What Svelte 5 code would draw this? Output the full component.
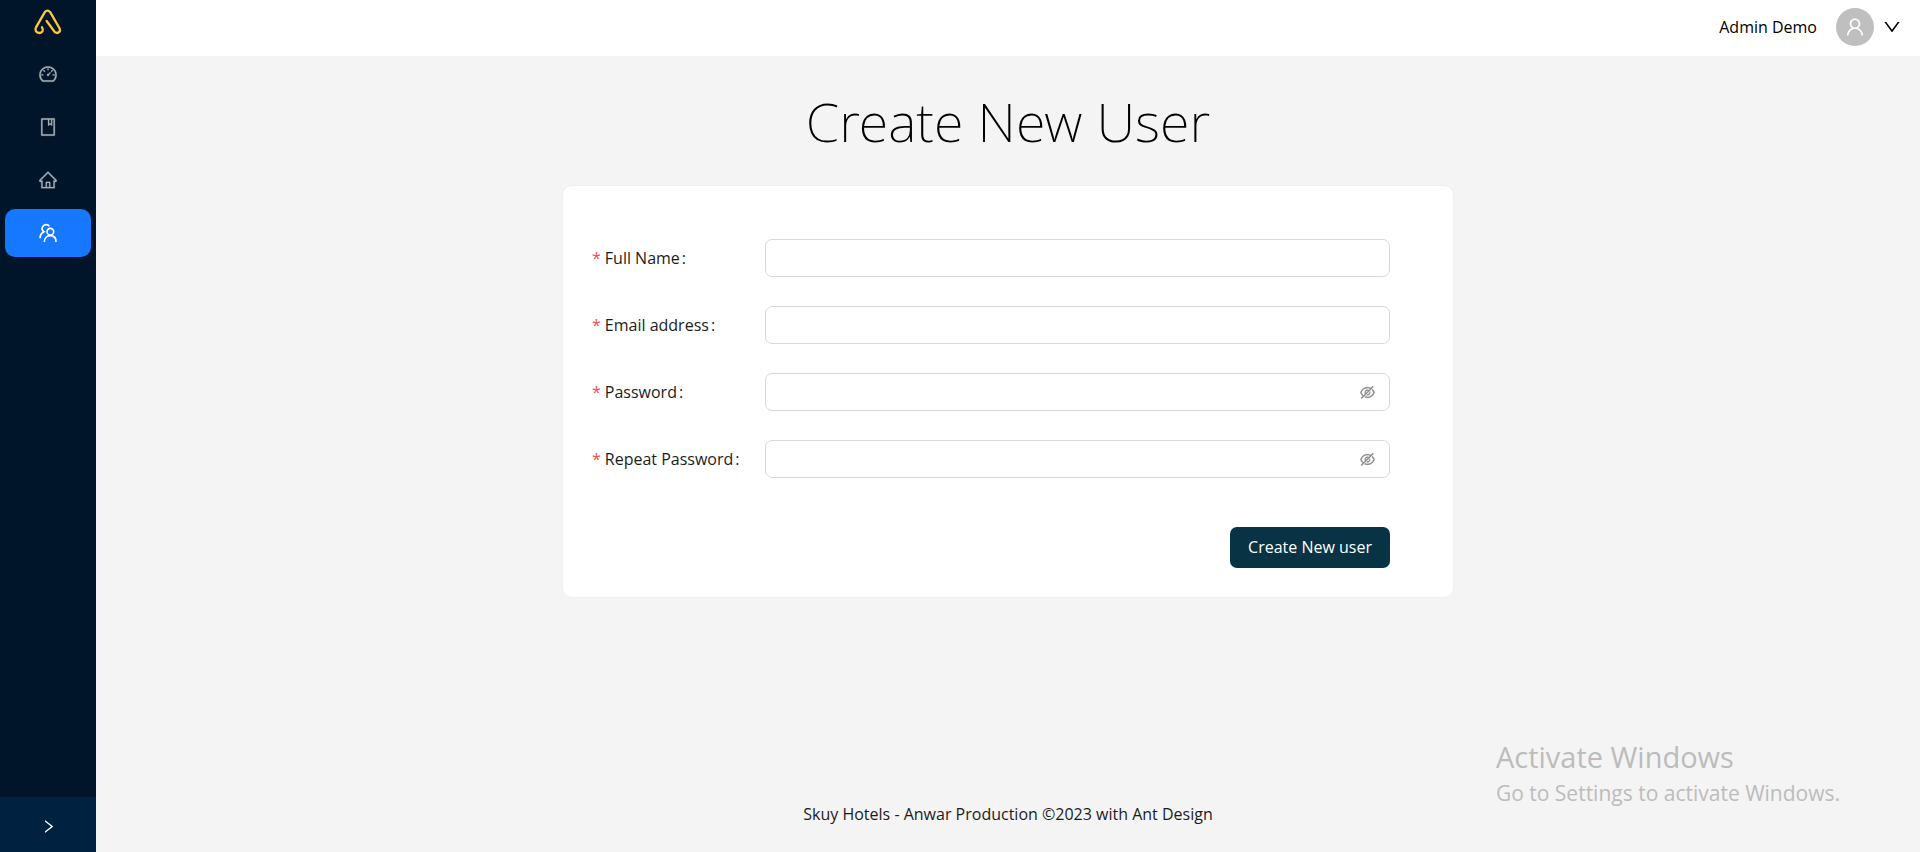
<script>
  const nav = [
    { label: 'Dashboard', icon: 'M924.8 385.6a446.7 446.7 0 00-96-142.4 446.7 446.7 0 00-142.4-96C631.1 123.8 572.5 112 512 112s-119.1 11.8-174.4 35.2a446.7 446.7 0 00-142.4 96 446.7 446.7 0 00-96 142.4C75.8 440.9 64 499.5 64 560c0 132.7 58.3 257.7 159.9 343.1l1.7 1.4c5.8 4.8 13.1 7.5 20.6 7.5h531.7c7.5 0 14.8-2.7 20.6-7.5l1.7-1.4C901.7 817.7 960 692.7 960 560c0-60.5-11.9-119.1-35.2-174.4zM761.4 836H262.6A371.12 371.12 0 01140 560c0-99.4 38.7-192.8 109-263 70.3-70.3 163.7-109 263-109 99.4 0 192.8 38.7 263 109 70.3 70.3 109 163.7 109 263 0 105.6-44.5 205.5-122.6 276zM623.5 421.5a8.03 8.03 0 00-11.3 0L527.7 506c-18.7-5-39.4-.2-54.1 14.5a55.95 55.95 0 000 79.2 55.95 55.95 0 0079.2 0 55.87 55.87 0 0014.5-54.1l84.5-84.5c3.1-3.1 3.1-8.2 0-11.3l-28.3-28.3zM490 320h44c4.4 0 8-3.6 8-8v-80c0-4.4-3.6-8-8-8h-44c-4.4 0-8 3.6-8 8v80c0 4.4 3.6 8 8 8zm260 218v44c0 4.4 3.6 8 8 8h80c4.4 0 8-3.6 8-8v-44c0-4.4-3.6-8-8-8h-80c-4.4 0-8 3.6-8 8zm12.7-197.2l-31.1-31.1a8.03 8.03 0 00-11.3 0l-56.6 56.6a8.03 8.03 0 000 11.3l31.1 31.1c3.1 3.1 8.2 3.1 11.3 0l56.6-56.6c3.1-3.1 3.1-8.2 0-11.3zm-458.6-31.1a8.03 8.03 0 00-11.3 0l-31.1 31.1a8.03 8.03 0 000 11.3l56.6 56.6c3.1 3.1 8.2 3.1 11.3 0l31.1-31.1c3.1-3.1 3.1-8.2 0-11.3l-56.6-56.6zM262 530h-80c-4.4 0-8 3.6-8 8v44c0 4.4 3.6 8 8 8h80c4.4 0 8-3.6 8-8v-44c0-4.4-3.6-8-8-8z' },
    { label: 'Bookings', icon: 'M832 64H192c-17.7 0-32 14.3-32 32v832c0 17.7 14.3 32 32 32h640c17.7 0 32-14.3 32-32V96c0-17.7-14.3-32-32-32zm-260 72h96v209.9L621.5 312 572 347.4V136zm220 752H232V136h280v296.9c0 3.3 1 6.6 3 9.3a15.9 15.9 0 0022.3 3.7l83.8-59.9 81.4 59.4c2.7 2 6 3.1 9.4 3.1 8.8 0 16-7.2 16-16V136h64v752z' },
    { label: 'Rooms', icon: 'M946.5 505L560.1 118.8l-25.9-25.9a31.5 31.5 0 00-44.4 0L77.5 505a63.9 63.9 0 00-18.8 46c.4 35.2 29.7 63.3 64.9 63.3h42.5V940h691.8V614.3h43.4c17.1 0 33.2-6.7 45.3-18.8a63.6 63.6 0 0018.7-45.3c0-17-6.7-33.1-18.8-45.2zM568 868H456V664h112v204zm217.9-325.7V868H632V640c0-22.1-17.9-40-40-40H432c-22.1 0-40 17.9-40 40v228H238.1V542.3h-96l370-369.7 23.1 23.1L882 542.3h-96.1z' },
  ];
  const fields = [
    { id: 'name', label: 'Full Name', type: 'text' },
    { id: 'email', label: 'Email address', type: 'email' },
    { id: 'password', label: 'Password', type: 'password' },
    { id: 'repeat', label: 'Repeat Password', type: 'password' },
  ];
</script>

<div class="layout">
  <aside>
    <a class="logo" href="#home" aria-label="Home">
      <svg width="30" height="28" viewBox="100 24 90 84" fill="none" stroke="#ffc53d" stroke-width="7" stroke-linecap="round" stroke-linejoin="round">
        <path d="M127 82C133 91 128 99 119 99C109 99 105 90 109 82L135 37Q143 27 152 37L179 84C185 95 175 102 166 97L141 63" />
      </svg>
    </a>
    <nav>
      {#each nav as item}
        <a href="#{item.label}" aria-label={item.label}>
          <svg width="20" height="20" viewBox="0 0 1024 1024" fill="currentColor" stroke="currentColor" stroke-width="12"><path d={item.icon} /></svg>
        </a>
      {/each}
      <a class="active" href="#users" aria-label="Users" aria-current="page">
        <svg width="20" height="20" viewBox="113 249 60 60" fill="none" stroke="currentColor" stroke-width="5" stroke-linecap="butt">
          <circle cx="150" cy="275" r="10" />
          <path d="M132 306C132 295 139 287 150 287S167 295 167 306M147 259C143 252 131 252 127 260C124 266 126 272 131 275C123 279 119 286 119 295" />
        </svg>
      </a>
    </nav>
    <button class="expand" type="button" aria-label="Expand menu">
      <svg width="17" height="17" viewBox="0 0 1024 1024" fill="currentColor"><path d="M765.7 486.8L314.9 134.7A7.97 7.97 0 00302 141v77.3c0 4.9 2.3 9.6 6.1 12.6l360 281.1-360 281.1c-3.9 3-6.1 7.7-6.1 12.6V883c0 6.7 7.7 10.4 12.9 6.3l450.8-352.1a31.96 31.96 0 000-50.4z" /></svg>
    </button>
  </aside>

  <div class="page">
    <header>
      <span class="user">Admin Demo</span>
      <span class="avatar">
        <svg width="22" height="22" viewBox="0 0 1024 1024" fill="currentColor"><path d="M858.5 763.6a374 374 0 00-80.6-119.5 375.63 375.63 0 00-119.5-80.6c-.4-.2-.8-.3-1.2-.5C719.5 518 760 444.7 760 362c0-137-111-248-248-248S264 225 264 362c0 82.7 40.5 156 102.8 201.1-.4.2-.8.3-1.2.5-44.8 18.9-85 46-119.5 80.6a375.63 375.63 0 00-80.6 119.5A371.7 371.7 0 00136 901.8a8 8 0 008 8.2h60c4.4 0 7.9-3.5 8-7.8 2-77.2 33-149.5 87.8-204.3 56.7-56.7 132-87.9 212.2-87.9s155.5 31.2 212.2 87.9C779 752.7 810 825 812 902.2c.1 4.4 3.6 7.8 8 7.8h60a8 8 0 008-8.2c-1-47.8-10.9-94.3-29.5-138.2zM512 534c-45.9 0-89.1-17.9-121.6-50.4S340 407.9 340 362c0-45.9 17.9-89.1 50.4-121.6S466.1 190 512 190s89.1 17.9 121.6 50.4S684 316.1 684 362c0 45.9-17.9 89.1-50.4 121.6S557.9 534 512 534z" /></svg>
      </span>
      <button class="menu" type="button" aria-label="Account menu">
        <svg width="20" height="20" viewBox="0 0 1024 1024" fill="currentColor"><path d="M884 256h-75c-5.1 0-9.9 2.5-12.9 6.6L512 654.2 227.9 262.6c-3-4.1-7.8-6.6-12.9-6.6h-75c-6.5 0-10.3 7.4-6.5 12.7l352.6 486.1c12.8 17.6 39 17.6 51.7 0l352.6-486.1c3.9-5.3.1-12.7-6.4-12.7z" /></svg>
      </button>
    </header>

    <main>
      <h1>Create New User</h1>
      <form class="card" onsubmit={(e) => e.preventDefault()}>
        {#each fields as field}
          <div class="row">
            <label for={field.id}><span class="star">*</span>{field.label}<span class="colon">:</span></label>
            <div class="box">
              <input id={field.id} type={field.type} />
              {#if field.type === 'password'}
                <button type="button" aria-label="Show password">
                  <svg width="17" height="17" viewBox="0 0 1024 1024" fill="currentColor" stroke="currentColor" stroke-width="12"><path d="M942.2 486.2Q889.47 375.11 816.7 305l-50.88 50.88C807.31 395.53 843.45 447.4 874.7 512 791.5 684.2 673.4 766 512 766q-72.67 0-133.87-22.38L323 798.75Q408 838 512 838q288.3 0 430.2-300.3a60.29 60.29 0 000-51.5zm-63.57-320.64L836 122.88a8 8 0 00-11.32 0L715.31 232.2Q624.86 186 512 186q-288.3 0-430.2 300.3a60.3 60.3 0 000 51.5q56.69 119.4 136.5 191.41L112.48 835a8 8 0 000 11.31L155.17 889a8 8 0 0011.31 0l712.15-712.12a8 8 0 000-11.32zM149.3 512C232.6 339.8 350.7 258 512 258c54.54 0 104.13 9.36 149.12 28.39l-70.3 70.3a176 176 0 00-238.13 238.13l-83.42 83.42C223.1 637.49 183.3 582.28 149.3 512zm246.7 0a112.11 112.11 0 01146.2-106.69L401.31 546.2A112 112 0 01396 512z" /><path d="M508 624c-3.46 0-6.87-.16-10.25-.47l-52.82 52.82a176.09 176.09 0 00227.42-227.42l-52.82 52.82c.31 3.38.47 6.79.47 10.25a111.94 111.94 0 01-112 112z" /></svg>
                </button>
              {/if}
            </div>
          </div>
        {/each}
        <button class="submit" type="submit">Create New user</button>
      </form>
    </main>

    <footer>Skuy Hotels - Anwar Production ©2023 with Ant Design</footer>
  </div>

  <div class="notice">
    <p class="notice-title">Activate Windows</p>
    <p>Go to Settings to activate Windows.</p>
  </div>
</div>

<style>
  :global(body) {
    margin: 0;
  }
  .layout {
    position: relative;
    display: flex;
    min-height: 100vh;
    background: #f4f4f4;
    color: #1c1c1c;
    font-family: 'Segoe UI', 'Open Sans', 'Noto Sans', sans-serif;
    font-size: 16px;
    line-height: 24px;
  }
  svg {
    display: block;
  }
  button {
    padding: 0;
    border: 0;
    background: none;
    color: inherit;
    font: inherit;
    cursor: pointer;
  }
  aside {
    display: flex;
    flex-direction: column;
    width: 96px;
    flex: none;
    background: #001529;
  }
  .logo {
    display: flex;
    justify-content: center;
    padding: 8px 0;
  }
  nav {
    display: flex;
    flex: 1;
    flex-direction: column;
    gap: 5px;
    padding: 6px 5px;
  }
  nav a {
    display: flex;
    align-items: center;
    justify-content: center;
    height: 48px;
    border-radius: 10px;
    color: #a6adb4;
  }
  nav a.active {
    background: #1677ff;
    color: #fff;
  }
  .expand {
    display: flex;
    align-items: center;
    justify-content: center;
    height: 55px;
    padding-top: 3px;
    background: #002140;
    color: #fff;
  }
  .page {
    display: flex;
    flex: 1;
    flex-direction: column;
    min-width: 0;
  }
  header {
    display: flex;
    align-items: center;
    justify-content: flex-end;
    height: 56px;
    padding: 0 18px 2px;
    background: #fff;
    color: #000;
    box-sizing: border-box;
  }
  .user {
    margin-right: 19px;
  }
  .avatar {
    display: flex;
    align-items: center;
    justify-content: center;
    width: 38px;
    height: 38px;
    margin-right: 8px;
    border-radius: 50%;
    background: #bfbfbf;
    color: #fff;
  }
  main {
    display: flex;
    flex: 1;
    flex-direction: column;
    align-items: center;
    padding: 24px;
  }
  h1 {
    margin: 0 0 22px;
    color: #000;
    font-family: 'Segoe UI Light', 'Noto Sans', 'Open Sans', sans-serif;
    font-size: 54px;
    font-weight: 200;
    line-height: 83px;
  }
  .card {
    display: flex;
    flex-direction: column;
    gap: 29px;
    width: 100%;
    max-width: 892px;
    padding: 53px 63px 29px 29px;
    border: 1px solid #f0f0f0;
    border-radius: 10px;
    background: #fff;
    box-sizing: border-box;
  }
  .row {
    display: grid;
    grid-template-columns: 173px 1fr;
    align-items: center;
  }
  .star {
    margin-right: 4px;
    color: #ff4d4f;
  }
  .colon {
    margin-left: 2px;
  }
  .box {
    display: flex;
    align-items: center;
    height: 38px;
    padding: 0 13px;
    border: 1px solid #d9d9d9;
    border-radius: 7px;
    box-sizing: border-box;
  }
  input {
    flex: 1;
    min-width: 0;
    padding: 0;
    border: 0;
    outline: 0;
    background: none;
    font: inherit;
  }
  .box button {
    color: #8c8c8c;
  }
  .submit {
    align-self: flex-end;
    margin-top: 20px;
    padding: 0 18px;
    border-radius: 7px;
    background: #083344;
    color: #fff;
    line-height: 41px;
  }
  footer {
    padding: 26px;
    text-align: center;
  }
  .notice {
    position: absolute;
    right: 80px;
    bottom: 44px;
    color: #bcbcbc;
    font-size: 21px;
    line-height: 30px;
    pointer-events: none;
  }
  .notice p {
    margin: 0;
  }
  .notice .notice-title {
    font-size: 29px;
    line-height: 42px;
  }
</style>
